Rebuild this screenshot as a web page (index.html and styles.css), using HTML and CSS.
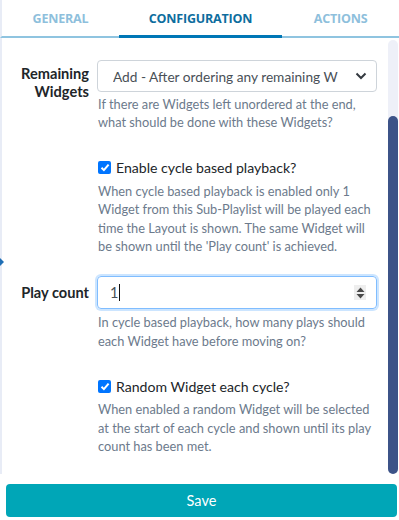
FILE: index.html
```html
<!DOCTYPE html>
<html>
<head>
<meta charset="utf-8">
<link rel="stylesheet" href="styles.css">
</head>
<body>
<div class="page">
  <div class="tabs">
    <div class="tab tab-general">GENERAL</div>
    <div class="tab tab-config active">CONFIGURATION</div>
    <div class="tab tab-actions">ACTIONS</div>
  </div>
  <div class="body">
    <div class="content">
      <div class="row">
        <label class="label">Remaining Widgets</label>
        <div class="control">
          <div class="select">
            <span class="select-text">Add - After ordering any remaining W</span>
            <svg class="chevron" width="12" height="8" viewBox="0 0 12 8"><path d="M1.5 1.5 L6 6 L10.5 1.5" fill="none" stroke="#343a40" stroke-width="2"/></svg>
          </div>
          <p class="help">If there are Widgets left unordered at the end, what should be done with these Widgets?</p>
        </div>
      </div>
      <div class="row row-check">
        <div class="label"></div>
        <div class="control">
          <div class="check">
            <span class="box"><svg width="10" height="9" viewBox="0 0 10 9"><path d="M1.5 4.8 L3.9 7.1 L8.6 1.6" fill="none" stroke="#fff" stroke-width="2"/></svg></span>
            <span class="check-label">Enable cycle based playback?</span>
          </div>
          <p class="help">When cycle based playback is enabled only 1 Widget from this Sub-Playlist will be played each time the Layout is shown. The same Widget will be shown until the 'Play count' is achieved.</p>
        </div>
      </div>
      <div class="row row-play">
        <label class="label label-single">Play count</label>
        <div class="control">
          <div class="input">
            <span class="input-text">1</span><span class="caret"></span>
            <span class="spin">
              <svg width="9" height="12" viewBox="0 0 9 12"><path d="M4.5 0.5 L8.5 5 L0.5 5 Z M0.5 7 L8.5 7 L4.5 11.5 Z" fill="#4a4a4a"/></svg>
            </span>
          </div>
          <p class="help">In cycle based playback, how many plays should each Widget have before moving on?</p>
        </div>
      </div>
      <div class="row row-check2">
        <div class="label"></div>
        <div class="control">
          <div class="check">
            <span class="box"><svg width="10" height="9" viewBox="0 0 10 9"><path d="M1.5 4.8 L3.9 7.1 L8.6 1.6" fill="none" stroke="#fff" stroke-width="2"/></svg></span>
            <span class="check-label">Random Widget each cycle?</span>
          </div>
          <p class="help">When enabled a random Widget will be selected at the start of each cycle and shown until its play count has been met.</p>
        </div>
      </div>
    </div>
    <div class="scrollbar"><div class="thumb"></div></div>
    <span class="edge-arrow"></span>
  </div>
  <div class="footer">
    <button class="save">Save</button>
  </div>
</div>
</body>
</html>
```

FILE: styles.css
```css
* { box-sizing: border-box; }
html, body { margin: 0; padding: 0; background: #fff; }
body {
  font-family: "Lato", "Noto Sans", sans-serif;
  color: #212529;
  width: 399px;
  height: 520px;
  overflow: hidden;
}
.page { position: relative; height: 520px; }
.tabs {
  display: flex;
  height: 38px;
  border-bottom: 2px solid #8fc4e0;
  border-left: 2px solid #e8ecf6;
}
.tab {
  font-family: "Open Sans", sans-serif;
  font-weight: 700;
  font-size: 12.5px;
  color: #8ebfdc;
  text-align: center;
  padding-top: 10px;
  letter-spacing: -0.2px;
}
.tab-general { width: 118px; }
.tab-config { width: 165px; color: #0d6d9e; border-bottom: 3px solid #0077b6; margin-bottom: -2px; }
.tab-actions { width: 118px; }
.body {
  position: relative;
  display: flex;
  height: 436px;
  border-left: 2px solid #e8ecf6;
}
.content { flex: 1; padding-top: 22px; }
.row { display: grid; grid-template-columns: 87px 280px; column-gap: 8px; }
.label {
  font-weight: 700;
  font-size: 14.6px;
  line-height: 18px;
  text-align: right;
  padding-top: 5px;
  color: #212529;
}
.label-single { padding-top: 8px; }
.control { min-width: 0; }
.select {
  height: 32px;
  border: 1px solid #ced4da;
  border-radius: 4px;
  display: flex;
  align-items: center;
  padding-left: 15px;
  padding-right: 9px;
  position: relative;
}
.select-text { font-size: 13.7px; color: #495057; white-space: nowrap; overflow: hidden; flex: 1; }
.chevron { flex: none; }
.help {
  margin: 3px 0 0 1px;
  font-size: 12.8px;
  line-height: 18.4px;
  color: #6c7a8c;
}
.row-check { margin-top: 27px; }
.check { display: flex; align-items: center; height: 18px; }
.box {
  width: 13px; height: 13px;
  background: #0075ff;
  border-radius: 2px;
  display: flex; align-items: center; justify-content: center;
  margin-left: 1px;
}
.check-label { font-size: 14.1px; margin-left: 5px; color: #212529; }
.row-check .help { margin-top: 5px; }
.row-play { margin-top: 21px; }
.input {
  height: 33px;
  border: 1px solid #80bdff;
  border-radius: 4px;
  box-shadow: 0 0 0 2px rgba(0, 123, 255, 0.2);
  display: flex;
  align-items: center;
  padding-left: 12px;
  position: relative;
}
.input-text { font-size: 14.5px; color: #495057; }
.caret { width: 1px; height: 17px; background: #111; margin-left: 1px; }
.spin {
  position: absolute;
  right: 10px; top: 8px;
  width: 12px; height: 15px;
  background: #eee;
  display: flex; align-items: center; justify-content: center;
}
.row-play .help { margin-top: 4px; }
.row-check2 { margin-top: 27px; }
.row-check2 .help { margin-top: 5px; }
.scrollbar {
  width: 10px;
  margin-right: 1px;
  margin-top: 2px;
  height: 434px;
  background: #eef0f8;
  border-radius: 5px;
  position: relative;
  flex: none;
}
.thumb {
  position: absolute;
  left: 0; right: 0;
  top: 76px; bottom: 0;
  background: #3c5388;
  border-radius: 5px;
}
.edge-arrow {
  position: absolute;
  left: -2px; top: 220px;
  width: 0; height: 0;
  border-top: 4px solid transparent;
  border-bottom: 4px solid transparent;
  border-left: 4px solid #1f6fb5;
}
.footer { padding: 10px 2px 0 6px; }
.save {
  width: 391px;
  height: 33px;
  background: #00a6b7;
  color: #fff;
  border: none;
  border-radius: 4px;
  font-family: "Lato", "Noto Sans", sans-serif;
  font-size: 14.5px;
  padding: 0;
}
```
